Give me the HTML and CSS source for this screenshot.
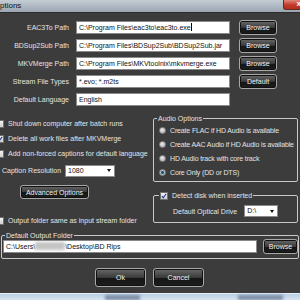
FILE: index.html
```html
<!DOCTYPE html>
<html>
<head>
<meta charset="utf-8">
<link rel="stylesheet" href="styles.css">
</head>
<body>
<div class="window">
  <div class="titlebar">
    <span class="title">ptions</span>
    <span class="close"><span class="close-x">x</span></span>
  </div>
  <div class="content">
    <div class="paths">
      <label class="plabel">EAC3To Path</label>
      <div class="input">C:\Program Files\eac3to\eac3to.exe<span class="caret"></span></div>
      <button class="btn sm">Browse</button>

      <label class="plabel">BDSup2Sub Path</label>
      <div class="input">C:\Program Files\BDSup2Sub\BDSup2Sub.jar</div>
      <button class="btn sm">Browse</button>

      <label class="plabel">MKVMerge Path</label>
      <div class="input">C:\Program Files\MKVtoolnix\mkvmerge.exe</div>
      <button class="btn sm">Browse</button>

      <label class="plabel">Stream File Types</label>
      <div class="input">*.evo; *.m2ts</div>
      <button class="btn sm">Default</button>

      <label class="plabel">Default Language</label>
      <div class="input">English</div>
      <span></span>
    </div>

    <div class="middle">
      <div class="leftcol">
        <div class="chkrow"><span class="chk"></span>Shut down computer after batch runs</div>
        <div class="chkrow"><span class="chk checked"><svg viewBox="0 0 8 8" width="6" height="6"><path d="M1 4 L3 6.5 L7 1" fill="none" stroke="#2a3f9a" stroke-width="1.6"/></svg></span>Delete all work files after MKVMerge</div>
        <div class="chkrow"><span class="chk"></span>Add non-forced captions for default language</div>
        <div class="caprow">
          <span class="caplabel">Caption Resolution</span>
          <div class="select cap">1080<span class="arrow"></span></div>
        </div>
        <div class="advrow"><button class="btn adv">Advanced Options</button></div>
        <div class="chkrow outchk"><span class="chk"></span>Output folder same as input stream folder</div>
      </div>
      <div class="rightcol">
        <div class="group audio">
          <span class="legend">Audio Options</span>
          <div class="radrow"><span class="radio"></span>Create FLAC if HD Audio is available</div>
          <div class="radrow"><span class="radio"></span>Create AAC Audio if HD Audio is available</div>
          <div class="radrow"><span class="radio"></span>HD Audio track with core track</div>
          <div class="radrow"><span class="radio on"></span>Core Only (DD or DTS)</div>
        </div>
        <div class="group detect">
          <span class="legend chklegend"><span class="chk checked"><svg viewBox="0 0 8 8" width="6" height="6"><path d="M1 4 L3 6.5 L7 1" fill="none" stroke="#2a3f9a" stroke-width="1.6"/></svg></span>Detect disk when inserted</span>
          <div class="driverow">
            <span>Default Optical Drive</span>
            <div class="select drive">D:\<span class="arrow"></span></div>
          </div>
        </div>
      </div>
    </div>

    <div class="group outgroup">
      <span class="legend">Default Output Folder</span>
      <div class="outrow">
        <div class="input outinput">C:\Users\<span class="blur"></span>\Desktop\BD Rips</div>
        <button class="btn sm outbrowse">Browse</button>
      </div>
    </div>

    <div class="actions">
      <button class="btn big">Ok</button>
      <button class="btn big">Cancel</button>
    </div>
  </div>
  <div class="taskbar"><span class="tb1"></span><span class="tb2"></span></div>
</div>
</body>
</html>
```
FILE: styles.css
```css
* { box-sizing: border-box; }
html, body { margin: 0; padding: 0; }
body {
  width: 300px;
  height: 300px;
  overflow: hidden;
  background: #3c3c3c;
  font-family: "Liberation Sans", Arial, sans-serif;
  font-size: 7px;
  color: #e4e4e4;
}
.window { width: 300px; height: 300px; display: flex; flex-direction: column; }

.titlebar {
  height: 13px;
  background: linear-gradient(#c4ccd4, #9aa6b2);
  display: flex;
  justify-content: space-between;
  align-items: flex-start;
  border-bottom: 1px solid #2c2c2c;
}
.title { color: #111; font-size: 8px; line-height: 12px; padding-left: 0; }
.close {
  width: 17px;
  height: 10px;
  background: linear-gradient(#e08a7c, #c23a28 55%, #b2301f);
  border-left: 1px solid #6b2a22;
  border-bottom: 1px solid #6b2a22;
  border-bottom-left-radius: 3px;
  display: flex;
  justify-content: flex-end;
  overflow: hidden;
}
.close-x { color: #fff; font-weight: bold; font-size: 8px; line-height: 8px; margin-right: -1px; }

.content { flex: 1; display: flex; flex-direction: column; }

.paths {
  margin-top: 5px;
  display: grid;
  grid-template-columns: 76px 163px 38px;
  grid-auto-rows: 18px;
  align-items: center;
}
.plabel { text-align: right; padding-right: 7px; white-space: nowrap; }
.input {
  background: #fff;
  color: #111;
  height: 13px;
  width: 154px;
  border: 1px solid #8a8a8a;
  line-height: 11px;
  padding-left: 2px;
  white-space: nowrap;
  overflow: hidden;
}
.caret { display: inline-block; width: 1px; height: 8px; background: #000; vertical-align: -1px; }

.btn {
  font-family: inherit;
  font-size: 7px;
  color: #f0f0f0;
  background: linear-gradient(#6a6a6a, #3a3a3a 50%, #151515 52%, #1e1e1e);
  border: 1px solid #a8a8a8;
  border-radius: 3px;
  padding: 0;
  box-shadow: inset 0 0 0 1px #111;
}
.sm { width: 38px; height: 15px; }

.middle { display: flex; height: 120px; }
.leftcol { width: 153px; display: flex; flex-direction: column; padding-top: 8px; }
.chkrow { height: 15px; display: flex; align-items: center; white-space: nowrap; }
.chk {
  width: 8px; height: 8px;
  background: linear-gradient(#f4f4f4, #d0d0d0);
  border: 1px solid #707070;
  display: inline-flex;
  align-items: center;
  justify-content: center;
  flex: none;
}
.leftcol .chk { margin-left: -4px; margin-right: 4px; }
.caprow { height: 15px; display: flex; align-items: center; margin-top: 2px; }
.caplabel { padding-left: 2px; width: 65px; }
.select {
  background: #fff;
  color: #111;
  height: 12px;
  border: 1px solid #8a8a8a;
  line-height: 10px;
  padding-left: 2px;
  display: flex;
  justify-content: space-between;
  align-items: center;
}
.arrow {
  width: 0; height: 0;
  border-left: 2.5px solid transparent;
  border-right: 2.5px solid transparent;
  border-top: 3px solid #111;
  margin-right: 3px;
}
.cap { width: 50px; }
.advrow { padding-left: 20px; margin-top: 7px; }
.adv { width: 69px; height: 14px; }
.outchk { margin-top: 14px; }

.rightcol { flex: 1; padding-top: 10px; display: flex; flex-direction: column; }
.group { position: relative; border: 1px solid #c8c8c8; border-radius: 2px; }
.legend {
  position: absolute;
  top: -5px;
  left: 3px;
  background: #3c3c3c;
  padding: 0 1px;
  line-height: 9px;
  white-space: nowrap;
}
.audio { width: 145px; height: 64px; padding-top: 4px; }
.radrow { height: 14px; display: flex; align-items: center; padding-left: 5px; white-space: nowrap; letter-spacing: -0.15px; }
.radio {
  width: 7px; height: 7px;
  border-radius: 50%;
  background: radial-gradient(circle at 40% 35%, #ececec, #a8a8a8);
  border: 1px solid #8c8c8c;
  margin-right: 4px;
  flex: none;
}
.radio.on { background: radial-gradient(circle, #1e4e6a 35%, #a8c0c8 45%, #b8b8b8); }
.detect { width: 145px; height: 28px; margin-top: 13px; }
.chklegend { left: 5px; top: -5px; display: flex; align-items: center; gap: 4px; }
.driverow { display: flex; align-items: center; padding-left: 19px; margin-top: 9px; gap: 7px; }
.drive { width: 34px; }

.outgroup { margin-top: 7px; height: 24px; margin-left: 1px; margin-right: 1px; border-radius: 2px; }
.outrow { display: flex; align-items: center; padding-top: 3px; }
.outinput { width: 254px; margin-left: 1px; }
.blur { display: inline-block; width: 30px; height: 8px; background: #c4c4c4; filter: blur(1.5px); vertical-align: -1px; }
.outbrowse { margin-left: 6px; width: 35px; }

.actions { display: flex; justify-content: center; gap: 7px; margin-top: 9px; padding-right: 0; margin-left: -1px; }
.big { width: 51px; height: 19px; font-size: 7px; }

.taskbar {
  height: 7px;
  margin-top: auto;
  background: linear-gradient(#b8cde4, #d8e4f0);
  border-top: 1px solid #e8eef6;
  position: relative;
}
.tb1, .tb2 { position: absolute; top: 1px; height: 5px; background: #7c8ea6; filter: blur(1.5px); }
.tb1 { left: 105px; width: 35px; }
.tb2 { left: 238px; width: 45px; }
```
